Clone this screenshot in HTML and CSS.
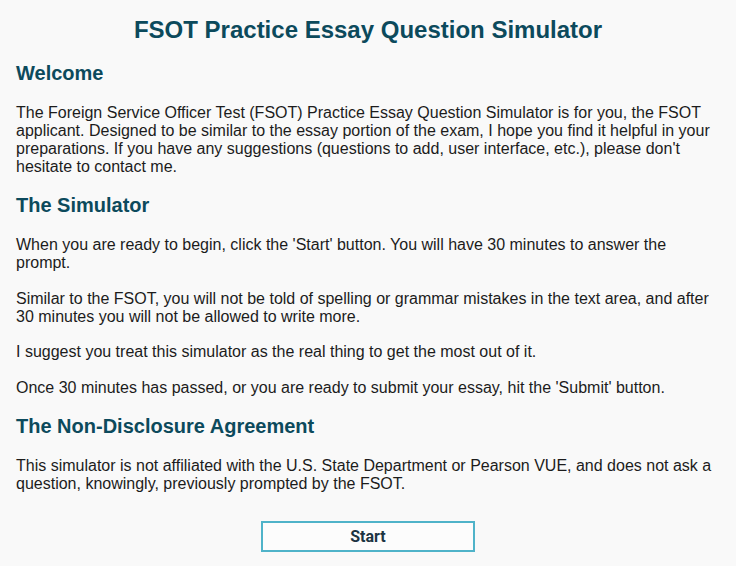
FILE: index.html
```html
<!DOCTYPE html>
<html lang="en">
<head>
<meta charset="utf-8">
<title>FSOT Practice Essay Question Simulator</title>
<link rel="stylesheet" href="styles.css">
</head>
<body>
<main class="page">
  <h1 class="title">FSOT Practice Essay Question Simulator</h1>
  <section class="section">
    <h2 class="heading">Welcome</h2>
    <p class="text">The Foreign Service Officer Test (FSOT) Practice Essay Question Simulator is for you, the FSOT applicant. Designed to be similar to the essay portion of the exam, I hope you find it helpful in your preparations. If you have any suggestions (questions to add, user interface, etc.), please don't hesitate to contact me.</p>
  </section>
  <section class="section">
    <h2 class="heading">The Simulator</h2>
    <p class="text">When you are ready to begin, click the 'Start' button. You will have 30 minutes to answer the prompt.</p>
    <p class="text">Similar to the FSOT, you will not be told of spelling or grammar mistakes in the text area, and after 30 minutes you will not be allowed to write more.</p>
    <p class="text">I suggest you treat this simulator as the real thing to get the most out of it.</p>
    <p class="text">Once 30 minutes has passed, or you are ready to submit your essay, hit the 'Submit' button.</p>
  </section>
  <section class="section">
    <h2 class="heading">The Non-Disclosure Agreement</h2>
    <p class="text">This simulator is not affiliated with the U.S. State Department or Pearson VUE, and does not ask a question, knowingly, previously prompted by the FSOT.</p>
  </section>
  <div class="actions">
    <button class="start" type="button">Start</button>
  </div>
</main>
</body>
</html>
```
FILE: styles.css
```css
html, body {
  margin: 0;
  padding: 0;
  background: #f9f9f9;
}
body {
  font-family: "Liberation Sans", Arial, sans-serif;
  color: #1c1c1c;
}
.page {
  padding: 16px 16px 0 16px;
}
.title {
  margin: 0 0 18px 0;
  text-align: center;
  font-size: 24px;
  line-height: 28px;
  font-weight: bold;
  color: #0c4a5c;
}
.heading {
  margin: 18px 0 19px 0;
  font-size: 20px;
  line-height: 23px;
  font-weight: bold;
  color: #0c4a5c;
}
.section {
  margin: 0;
}
.text {
  margin: 0 0 17.5px 0;
  font-size: 16px;
  line-height: 18px;
}
.actions {
  display: flex;
  justify-content: center;
  padding-top: 11px;
}
.start {
  box-sizing: border-box;
  width: 214px;
  height: 31px;
  padding: 0;
  background: #fcfcfc;
  border: 2px solid #4fb3c9;
  font-family: Roboto, "Liberation Sans", sans-serif;
  font-weight: bold;
  font-size: 16px;
  color: #1c3442;
  cursor: pointer;
}
```
